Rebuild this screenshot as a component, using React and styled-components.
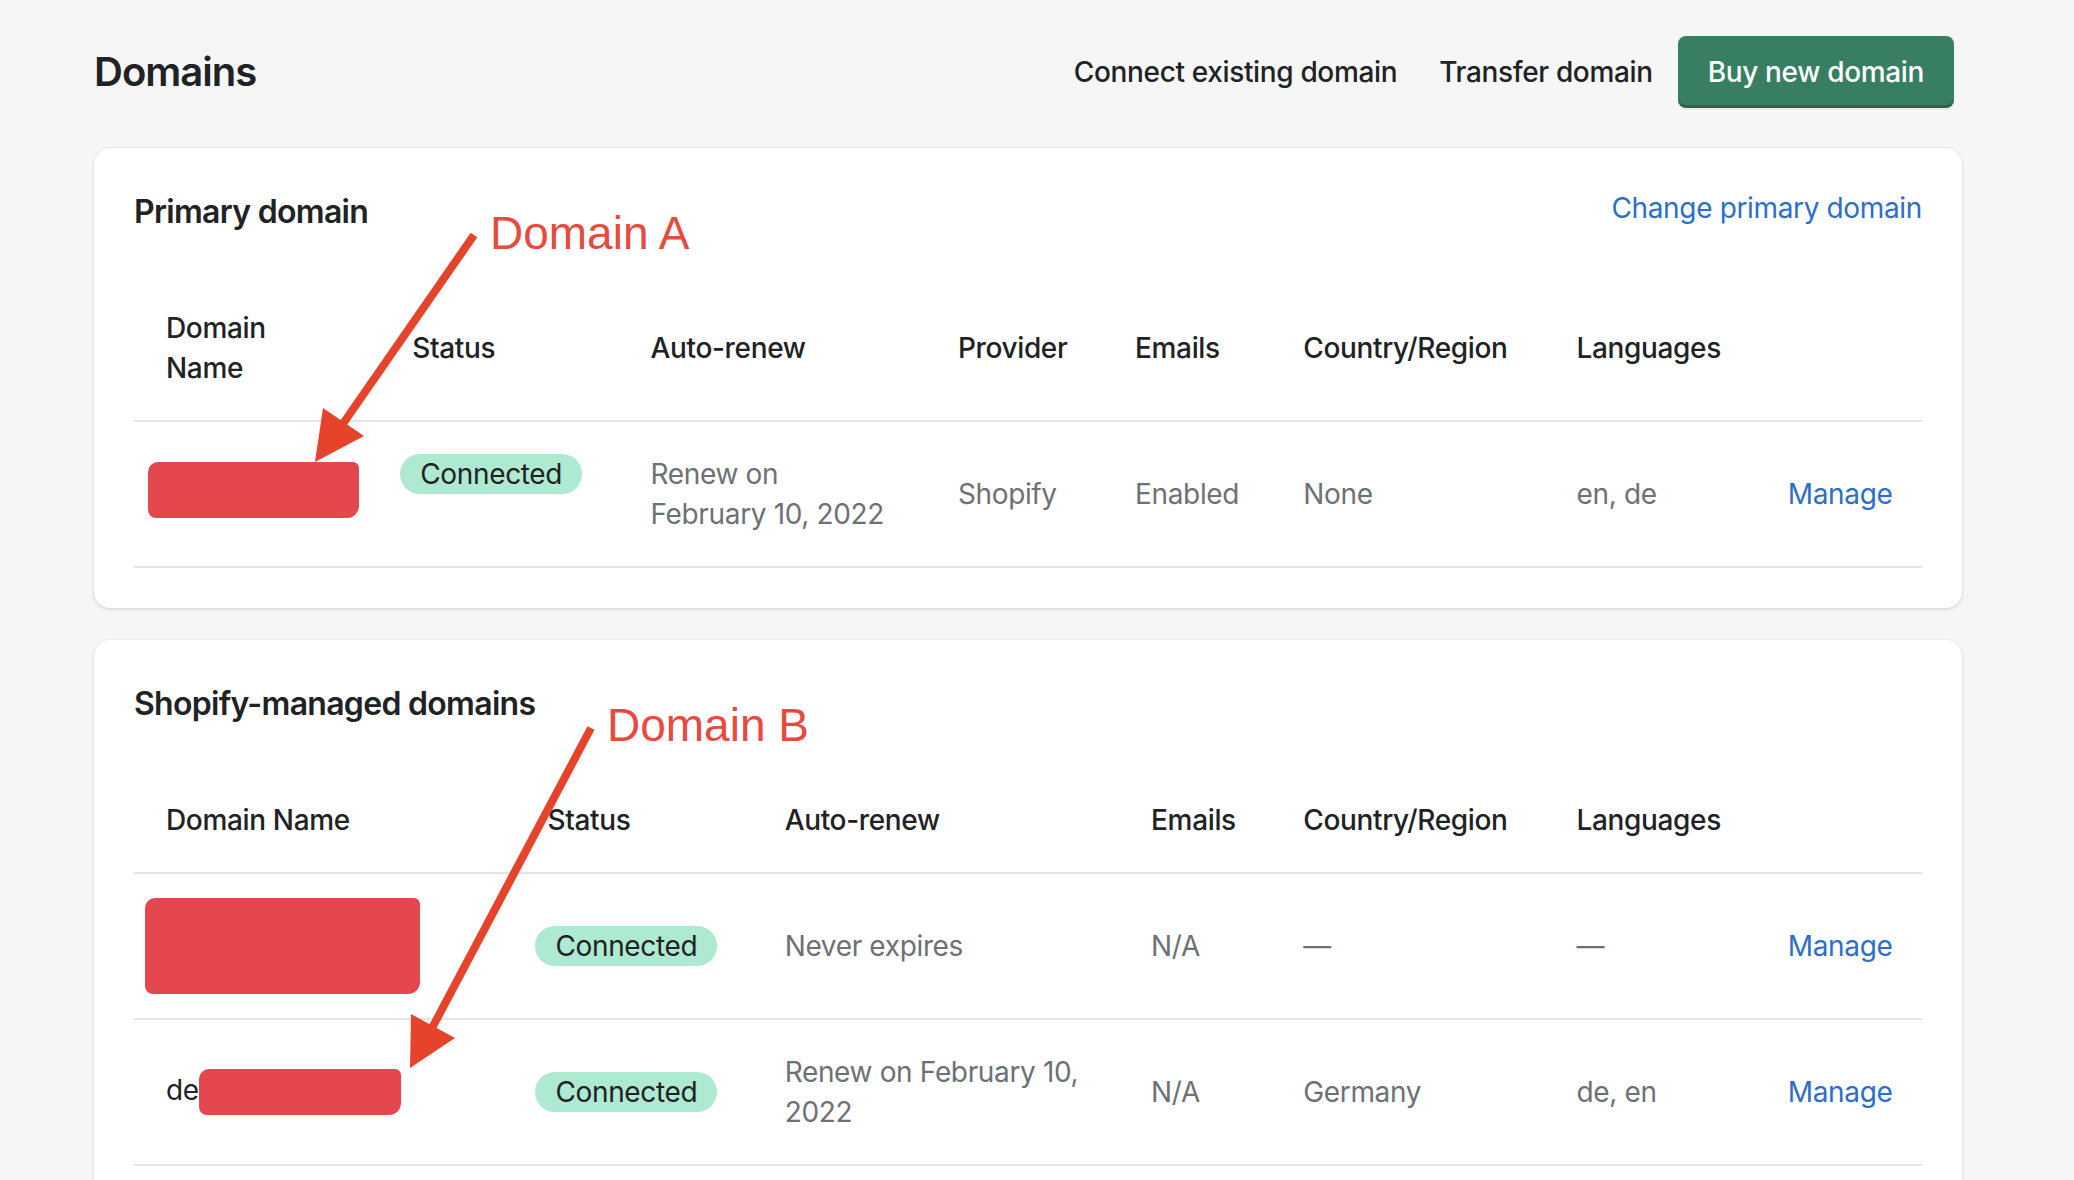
import React from 'react';
import styled, { createGlobalStyle } from 'styled-components';

const GlobalStyle = createGlobalStyle`
  html, body {
    margin: 0;
    padding: 0;
    background: #f6f6f7;
  }
  body {
    font-family: Inter, 'Noto Sans', 'Liberation Sans', sans-serif;
    color: #202223;
    letter-spacing: -0.35px;
    -webkit-font-smoothing: antialiased;
  }
`;

const primaryCols = [246, 238, 307, 177, 168, 273, 211, 166];
const managedCols = [381, 237, 366, 152, 273, 211, 166];

const Page = styled.div`
  position: relative;
  width: 2074px;
  height: 1180px;
  overflow: hidden;
  box-sizing: border-box;
  padding: 36px 112px 0 94px;
`;

const Header = styled.header`
  display: flex;
  align-items: center;
  justify-content: space-between;
  height: 72px;
  padding-right: 8px;
`;

const Title = styled.h1`
  margin: 0;
  font-size: 40px;
  line-height: 48px;
  font-weight: 600;
  letter-spacing: -1px;
`;

const Actions = styled.div`
  display: flex;
  align-items: center;
`;

const PlainButton = styled.button`
  border: 0;
  background: none;
  font: inherit;
  font-size: 28px;
  font-weight: 500;
  letter-spacing: -0.35px;
  color: #202223;
  padding: 0 21px;
  height: 72px;
  cursor: pointer;
`;

const PrimaryButton = styled.button`
  border: 0;
  margin-left: 4px;
  height: 72px;
  padding: 0 30px;
  border-radius: 8px;
  background: #387e62;
  color: #ffffff;
  font: inherit;
  font-size: 28px;
  font-weight: 500;
  letter-spacing: -0.35px;
  box-shadow: 0 2px 0 rgba(0, 0, 0, 0.05), inset 0 -3px 0 rgba(0, 0, 0, 0.2);
  cursor: pointer;
`;

const Card = styled.section`
  background: #ffffff;
  border-radius: 16px;
  margin-top: ${(p) => p.$gap}px;
  padding: 40px 40px 40px;
  box-shadow: 0 0 0 1px rgba(63, 63, 68, 0.05), 0 2px 4px rgba(63, 63, 68, 0.12);
`;

const CardHead = styled.div`
  display: flex;
  align-items: flex-start;
  justify-content: space-between;
  margin-bottom: 40px;
`;

const CardTitle = styled.h2`
  margin: 0;
  font-size: 32px;
  line-height: 48px;
  font-weight: 600;
  letter-spacing: -0.7px;
`;

const Link = styled.a`
  color: #2c6ecb;
  font-size: 28px;
  line-height: 40px;
  text-decoration: none;
  cursor: pointer;
`;

const Table = styled.table`
  width: 100%;
  border-collapse: collapse;
  table-layout: fixed;
  font-size: 28px;
  line-height: 40px;
`;

const Col = styled.col`
  width: ${(p) => p.$w}px;
`;

const Th = styled.th`
  text-align: left;
  font-weight: 500;
  color: #202223;
  padding: 32px;
  border-bottom: 2px solid #e3e4e6;
  vertical-align: middle;
`;

const Td = styled.td`
  padding: 32px;
  border-bottom: 2px solid #e3e4e6;
  color: ${(p) => (p.$dark ? '#202223' : '#6d7175')};
  vertical-align: ${(p) => p.$valign || 'middle'};
  white-space: ${(p) => (p.$nowrap ? 'nowrap' : 'normal')};
`;

const Badge = styled.span`
  display: inline-block;
  margin-left: -12px;
  padding: 0 20px;
  height: 40px;
  line-height: 40px;
  border-radius: 20px;
  background: #aee9d1;
  color: #202223;
`;

const Redact = styled.span`
  display: inline-block;
  vertical-align: middle;
  width: ${(p) => p.$w}px;
  height: ${(p) => p.$h}px;
  margin: ${(p) => p.$m || '0'};
  background: #e5474f;
  border-radius: 10px 6px 12px 8px;
`;

const Overlay = styled.svg`
  position: absolute;
  top: 0;
  left: 0;
  pointer-events: none;
`;

const Callout = styled.text`
  font-family: 'Liberation Sans', Arial, sans-serif;
  font-size: 46px;
  letter-spacing: 0;
  fill: #e74a3f;
`;

const Arrow = ({ from, to, head }) => (
  <>
    <line
      x1={from[0]}
      y1={from[1]}
      x2={to[0]}
      y2={to[1]}
      stroke="#e6432b"
      strokeWidth="8"
    />
    <polygon points={head.map((p) => p.join(',')).join(' ')} fill="#e6432b" />
  </>
);

export default function App() {
  return (
    <>
      <GlobalStyle />
      <Page>
        <Header>
          <Title>Domains</Title>
          <Actions>
            <PlainButton>Connect existing domain</PlainButton>
            <PlainButton>Transfer domain</PlainButton>
            <PrimaryButton>Buy new domain</PrimaryButton>
          </Actions>
        </Header>

        <Card $gap={40}>
          <CardHead>
            <CardTitle>Primary domain</CardTitle>
            <Link>Change primary domain</Link>
          </CardHead>
          <Table>
            <colgroup>
              {primaryCols.map((w, i) => (
                <Col key={i} $w={w} />
              ))}
            </colgroup>
            <thead>
              <tr>
                <Th>
                  Domain
                  <br />
                  Name
                </Th>
                <Th>Status</Th>
                <Th>Auto-renew</Th>
                <Th>Provider</Th>
                <Th>Emails</Th>
                <Th>Country/Region</Th>
                <Th>Languages</Th>
                <Th />
              </tr>
            </thead>
            <tbody>
              <tr>
                <Td $dark>
                  <Redact $w={211} $h={56} $m="-8px 0 0 -18px" />
                </Td>
                <Td $valign="top" $nowrap>
                  <Badge>Connected</Badge>
                </Td>
                <Td $nowrap>
                  Renew on
                  <br />
                  February 10, 2022
                </Td>
                <Td>Shopify</Td>
                <Td>Enabled</Td>
                <Td>None</Td>
                <Td>en, de</Td>
                <Td>
                  <Link>Manage</Link>
                </Td>
              </tr>
            </tbody>
          </Table>
        </Card>

        <Card $gap={32}>
          <CardHead>
            <CardTitle>Shopify-managed domains</CardTitle>
          </CardHead>
          <Table>
            <colgroup>
              {managedCols.map((w, i) => (
                <Col key={i} $w={w} />
              ))}
            </colgroup>
            <thead>
              <tr>
                <Th>Domain Name</Th>
                <Th>Status</Th>
                <Th>Auto-renew</Th>
                <Th>Emails</Th>
                <Th>Country/Region</Th>
                <Th>Languages</Th>
                <Th />
              </tr>
            </thead>
            <tbody>
              <tr>
                <Td $dark>
                  <Redact $w={275} $h={96} $m="-8px 0 -8px -21px" />
                </Td>
                <Td $nowrap>
                  <Badge>Connected</Badge>
                </Td>
                <Td>Never expires</Td>
                <Td>N/A</Td>
                <Td>—</Td>
                <Td>—</Td>
                <Td>
                  <Link>Manage</Link>
                </Td>
              </tr>
              <tr>
                <Td $dark $nowrap>
                  de
                  <Redact $w={202} $h={46} />
                </Td>
                <Td $nowrap>
                  <Badge>Connected</Badge>
                </Td>
                <Td>
                  Renew on February 10,
                  <br />
                  2022
                </Td>
                <Td>N/A</Td>
                <Td>Germany</Td>
                <Td>de, en</Td>
                <Td>
                  <Link>Manage</Link>
                </Td>
              </tr>
            </tbody>
          </Table>
        </Card>

        <Overlay width="2074" height="1180" viewBox="0 0 2074 1180">
          <Arrow
            from={[474, 235]}
            to={[340, 428]}
            head={[
              [315, 462],
              [323, 408],
              [364, 436],
            ]}
          />
          <Callout x="490" y="249">
            Domain A
          </Callout>
          <Arrow
            from={[591, 728]}
            to={[431, 1030]}
            head={[
              [410, 1068],
              [411, 1014],
              [455, 1038],
            ]}
          />
          <Callout x="607" y="741">
            Domain B
          </Callout>
        </Overlay>
      </Page>
    </>
  );
}
